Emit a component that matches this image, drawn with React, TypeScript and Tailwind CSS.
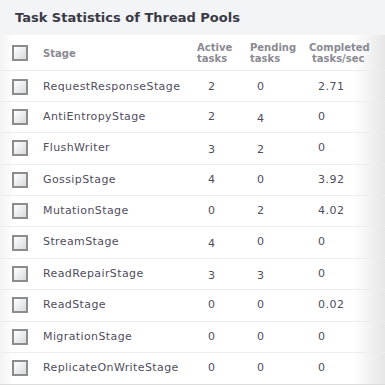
const rows: { name: string; active: string; pending: string; completed: string; aLow?: boolean; pLow?: boolean }[] = [
  { name: "RequestResponseStage", active: "2", pending: "0", completed: "2.71" },
  { name: "AntiEntropyStage", active: "2", pending: "4", completed: "0", pLow: true },
  { name: "FlushWriter", active: "3", pending: "2", completed: "0", aLow: true, pLow: true },
  { name: "GossipStage", active: "4", pending: "0", completed: "3.92" },
  { name: "MutationStage", active: "0", pending: "2", completed: "4.02" },
  { name: "StreamStage", active: "4", pending: "0", completed: "0", aLow: true },
  { name: "ReadRepairStage", active: "3", pending: "3", completed: "0", aLow: true, pLow: true },
  { name: "ReadStage", active: "0", pending: "0", completed: "0.02" },
  { name: "MigrationStage", active: "0", pending: "0", completed: "0" },
  { name: "ReplicateOnWriteStage", active: "0", pending: "0", completed: "0" },
];

function Box() {
  return (
    <div className="w-4 h-4 border-2 border-[#8c8c8c] bg-[linear-gradient(135deg,#ffffff,#d8dadd)]" />
  );
}

export default function App() {
  return (
    <div
      className="w-[385px] h-[387px] overflow-hidden bg-white text-[#4f4d5c]"
      style={{ fontFamily: '"DejaVu Sans", Verdana, sans-serif' }}
    >
      {/* title bar */}
      <div className="h-[35px] bg-[#f3f4f7] flex items-center pl-[15px]">
        <h2 className="text-[13px] font-bold text-[#3a3a44]">Task Statistics of Thread Pools</h2>
      </div>

      <div className="bg-[linear-gradient(to_right,#f3f3f3,#ffffff_14px,#ffffff_calc(100%-32px),#e6e6e6)] border-b border-[#dcdcdc]">
        <table className="w-full border-collapse text-[11px]">
          <thead>
            <tr className="h-[35px] border-b border-[#ededed] text-[10px] font-bold text-[#8a8a92] leading-[11px]">
              <th className="w-[43px] pl-3 pt-[2px] text-left font-normal">
                <Box />
              </th>
              <th className="w-[154px] pt-[2px] text-left">Stage</th>
              <th className="w-[53px] pt-[2px] text-left">Active<br />tasks</th>
              <th className="w-[59px] pt-[2px] text-left">Pending<br />tasks</th>
              <th className="pt-[2px] text-left">
                Completed<br />
                <span className="pl-[3px]">tasks/sec</span>
              </th>
            </tr>
          </thead>
          <tbody>
            {rows.map((r) => (
              <tr key={r.name} className="h-[31.4px] border-b border-[#ededed] last:border-b-0 [&:first-child>td]:pt-[3px]">
                <td className="pl-3">
                  <Box />
                </td>
                <td className="tracking-[0.4px]">{r.name}</td>
                <td className="pl-[11px]">
                  <span className={r.aLow ? "relative top-[2px]" : ""}>{r.active}</span>
                </td>
                <td className="pl-[7px]">
                  <span className={r.pLow ? "relative top-[2px]" : ""}>{r.pending}</span>
                </td>
                <td className="pl-[9px] tracking-[0.5px]">{r.completed}</td>
              </tr>
            ))}
          </tbody>
        </table>
      </div>
    </div>
  );
}
